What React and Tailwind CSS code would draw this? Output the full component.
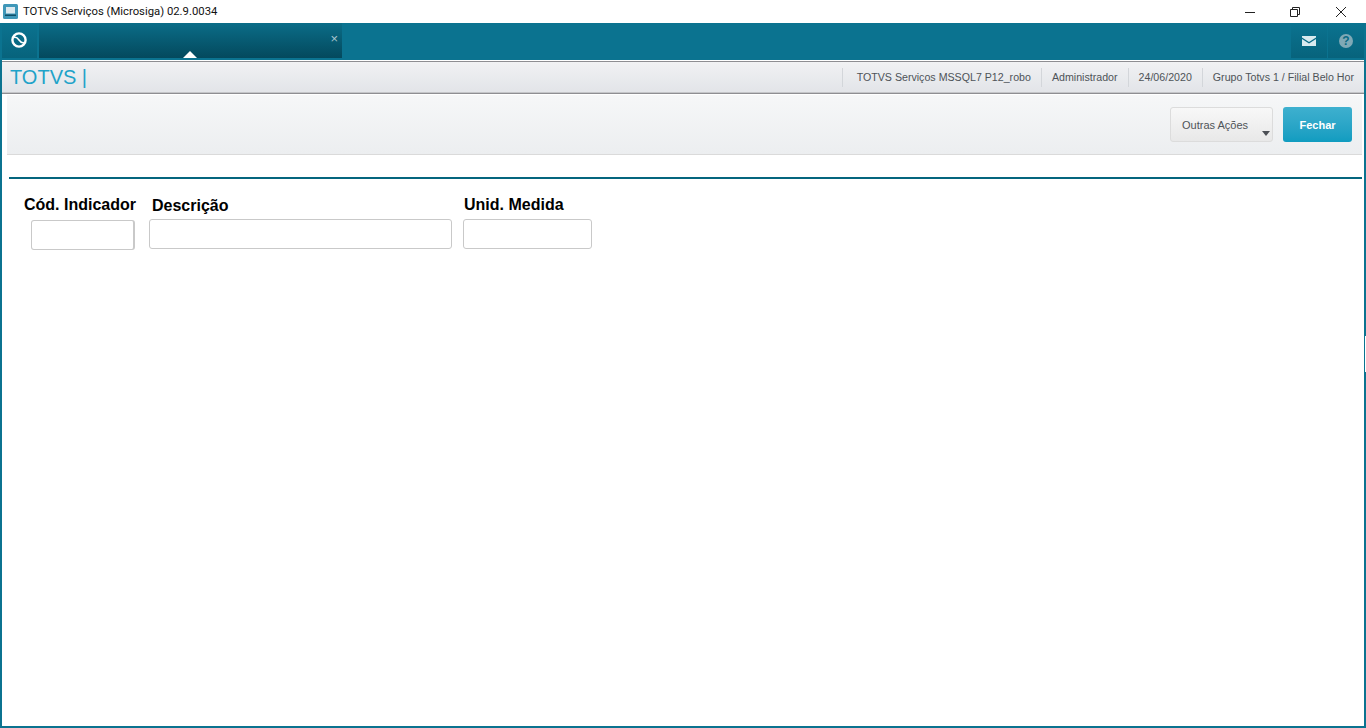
import React from "react";

const font = { arial: "font-['Liberation_Sans',Arial,sans-serif]" };

const LogoIcon = () => (
  <svg width="18" height="18" viewBox="0 0 18 18" fill="none">
    <circle cx="9" cy="9" r="6.6" stroke="#fff" strokeWidth="2.4" />
    <path d="M4 6.5 C9 4.5 9 13.5 14 11.5" stroke="#fff" strokeWidth="1.6" fill="none" />
  </svg>
);

const AppIcon = () => (
  <svg width="15" height="15" viewBox="0 0 15 15">
    <rect width="15" height="15" rx="1.5" fill="#3f97b8" />
    <rect x="3" y="3" width="9" height="6.5" fill="#dbe8ee" />
    <rect x="2" y="10.5" width="11" height="1.5" fill="#0f4f68" />
  </svg>
);

const Sep = () => <div className="h-[19px] w-px bg-[#d3d6da]" />;

const Field = ({ label, labelClass, inputClass }) => (
  <div className="flex flex-col items-start">
    <span className={`text-[16px] leading-[18px] font-bold text-black ${labelClass}`}>{label}</span>
    <input
      type="text"
      className={`h-[30px] rounded-[3px] border border-[#c9c9c9] bg-white outline-none ${inputClass}`}
    />
  </div>
);

export default function App() {
  return (
    <div className={`relative flex h-[728px] w-[1366px] flex-col overflow-hidden bg-white ${font.arial}`}>
      {/* WINDOW TITLE */}
      <div className="flex h-[23px] shrink-0 items-center bg-white">
        <div className="ml-[3px]">
          <AppIcon />
        </div>
        <span className="ml-[5px] pt-[2px] font-['Roboto',sans-serif] text-[11.3px] text-[#111]">TOTVS Serviços (Microsiga) 02.9.0034</span>
        <div className="ml-auto flex items-center">
          <svg width="12" height="12" viewBox="0 0 12 12" className="mr-[33px]">
            <path d="M1 6.5h10" stroke="#222" strokeWidth="1" />
          </svg>
          <svg width="12" height="12" viewBox="0 0 12 12" className="mr-[34px]">
            <path d="M1.5 3.5h7v7h-7z M3.5 3.5v-2h7v7h-2" stroke="#222" strokeWidth="1" fill="none" />
          </svg>
          <svg width="12" height="12" viewBox="0 0 12 12" className="mr-[19px]">
            <path d="M1 1l10 10M11 1L1 11" stroke="#222" strokeWidth="1" />
          </svg>
        </div>
      </div>

      {/* FRAME */}
      <div className="flex min-h-0 flex-1 flex-col border-x-2 border-b-2 border-[#0b7390]">
        {/* NAV BAR */}
        <div className="flex h-[37px] shrink-0 bg-[#0b7390]">
          <div className="flex h-[35px] w-[35px] items-center justify-center bg-gradient-to-b from-[#0b7390] to-[#07637c] pb-[1px] pr-[2px]">
            <LogoIcon />
          </div>
          <div className="relative ml-[2px] h-[35px] w-[303px] bg-gradient-to-b from-[#0b6d88] to-[#04495d]">
            <span className="absolute right-[4px] top-[9px] text-[13px] leading-[14px] text-[#a9c6cf]">×</span>
            <div className="absolute bottom-0 left-[144px] h-0 w-0 border-x-[7px] border-b-[7px] border-x-transparent border-b-white" />
          </div>
          <div className="ml-auto flex h-[35px] gap-px">
            <div className="flex w-[36px] items-center justify-center bg-gradient-to-b from-[#0b7390] to-[#07637c]">
              <svg width="14" height="10" viewBox="0 0 14 10">
                <path d="M0 0h14v1.5L7 6 0 1.5z" fill="#d9eaef" />
                <path d="M0 3l7 4.4L14 3v7H0z" fill="#d9eaef" />
              </svg>
            </div>
            <div className="flex w-[36px] items-center justify-center bg-gradient-to-b from-[#0b7390] to-[#07637c]">
              <div className="flex h-[14px] w-[14px] items-center justify-center rounded-full bg-[#7fa9b6] text-[12px] font-bold leading-none text-[#0a6a84]">?</div>
            </div>
          </div>
        </div>

        {/* HEADER */}
        <div className="flex h-[34px] shrink-0 items-center border-y border-b-[#8e8e92] border-t-white bg-gradient-to-b from-[#f1f2f4] to-[#e2e4e8] pl-[8px] pr-[10px] shadow-[inset_0_1px_0_#8e8e92,inset_0_-1px_0_#c4c5c8]">
          <span className="text-[20px] leading-none text-[#1fa3c9]">TOTVS |</span>
          <div className="ml-auto flex items-center pt-px text-[10.65px] text-[#4e5358]">
            <Sep />
            <span className="ml-[14px] mr-[10px] whitespace-nowrap">TOTVS Serviços MSSQL7 P12_robo</span>
            <Sep />
            <span className="mx-[10px] whitespace-nowrap">Administrador</span>
            <Sep />
            <span className="mx-[10px] whitespace-nowrap">24/06/2020</span>
            <Sep />
            <span className="ml-[10px] whitespace-nowrap">Grupo Totvs 1 / Filial Belo Hor</span>
          </div>
        </div>

        {/* TOOLBAR */}
        <div className="ml-[5px] mr-[2px] mt-px flex h-[60px] shrink-0 items-start justify-end gap-[10px] border-b border-[#dadada] bg-gradient-to-b from-[#f6f7f8] to-[#eceef0] pr-[10px] pt-[12px]">
          <button className="relative h-[35px] w-[103px] rounded-[3px] border border-[#dcdcdc] bg-gradient-to-b from-[#f8f8f8] to-[#e8e8e8] pl-[11px] pt-[2px] text-left text-[11px] text-[#4e5358]">
            Outras Ações
            <span className="absolute bottom-[5px] right-[2px] h-0 w-0 border-x-[4px] border-t-[5px] border-x-transparent border-t-[#4c4f55]" />
          </button>
          <button className="h-[35px] w-[69px] rounded-[3px] bg-gradient-to-b from-[#3eb0cf] to-[#0f9cc0] pt-px text-[11px] font-bold text-white">
            Fechar
          </button>
        </div>

        {/* CONTENT */}
        <div className="ml-[7px] mr-[2px] mt-[22px] h-[2px] shrink-0 bg-[#04657e]" />
        <div className="flex items-start pl-[22px] pt-[17px]">
          <Field label="Cód. Indicador" labelClass="mb-[6px]" inputClass="ml-[7px] w-[104px] border-r-2" />
          <div className="ml-[13px]">
            <Field label="Descrição" labelClass="ml-[3px] mt-px mb-[4px]" inputClass="w-[303px]" />
          </div>
          <div className="ml-[11px]">
            <Field label="Unid. Medida" labelClass="ml-px mb-[5px]" inputClass="w-[129px]" />
          </div>
        </div>
      </div>

      {/* right frame notch */}
      <div className="absolute right-0 top-[336px] h-[36px] w-px bg-white" />
    </div>
  );
}
